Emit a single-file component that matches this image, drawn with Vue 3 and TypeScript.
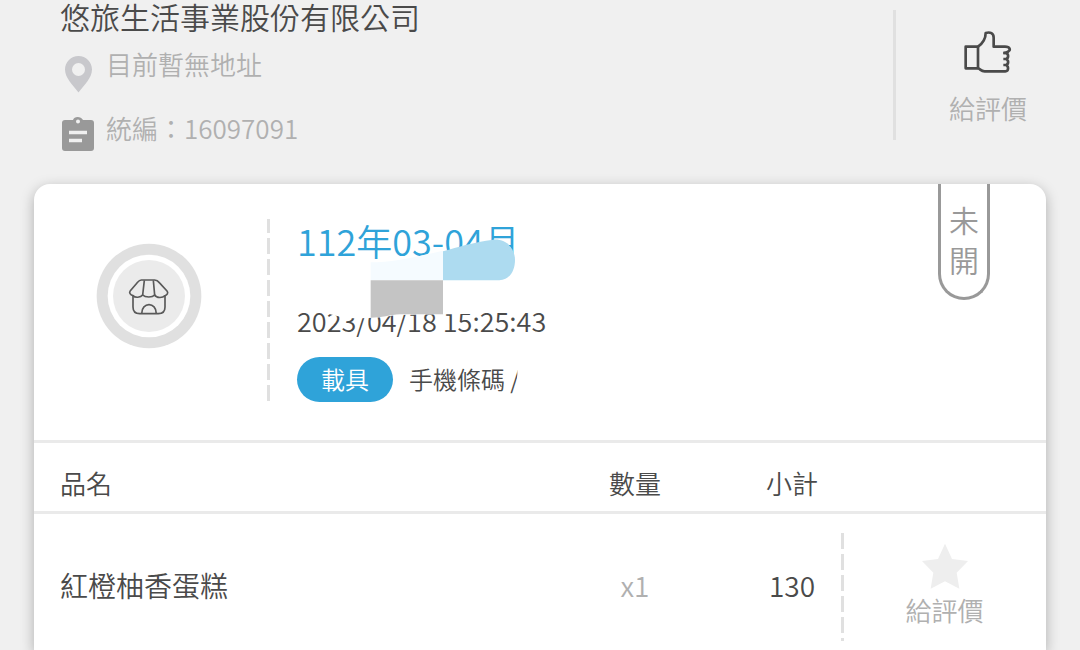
<script setup lang="ts">
interface Item {
  name: string
  quantity: number
  subtotal: number
}

const seller = { name: '悠旅生活事業股份有限公司', address: '目前暫無地址', taxId: '16097091' }
const invoice = { period: '112年03-04月', time: '2023/04/18 15:25:43', carrier: '手機條碼 /' }
const items: Item[] = [{ name: '紅橙柚香蛋糕', quantity: 1, subtotal: 130 }]
</script>

<template>
  <main class="page">
    <header class="seller">
      <div class="seller-info">
        <h1>{{ seller.name }}</h1>
        <p class="detail">
          <svg class="detail-icon" viewBox="0 0 36 46" aria-hidden="true">
            <path fill="#c8c8cc" fill-rule="evenodd" d="M18.5 9C11 9 5 15 5 22.5C5 31 13 38 18.5 45.500C24 38 32 31 32 22.500C32 15 26 9 18.500 9ZM18.500 16A6.500 6.500 0 1 1 18.500 29A6.500 6.500 0 1 1 18.500 16Z" />
          </svg>
          <span>{{ seller.address }}</span>
        </p>
        <p class="detail">
          <svg class="detail-icon" viewBox="0 0 36 46" aria-hidden="true">
            <path fill="#999" fill-rule="evenodd" d="M5 9H13C14 5 21 5 23 9H31Q34 9 34 12V37Q34 40 31 40H5Q2 40 2 37V12Q2 9 5 9ZM18 8.500A2 2 0 1 0 18 12.500A2 2 0 1 0 18 8.500Z" />
            <path stroke="#f0f0f0" stroke-width="3.500" d="M9 21.500H27M9 29.500H22" />
          </svg>
          <span>統編：{{ seller.taxId }}</span>
        </p>
      </div>
      <button class="rate rate-seller" type="button">
        <svg class="thumb" viewBox="249 86 150 138" aria-hidden="true">
          <g fill="none" stroke="#4a4a4a" stroke-width="8" stroke-linejoin="round">
            <path d="M257 139H294V204H257Z" />
            <path d="M294 139C308 129 317 118 317 98C331 94 341 99 341 112V139H375C391 139 392 149 385 153C382 157 376 158 370 158" />
            <path d="M370 158H378C387 161 386 174 378 176H370M378 176C387 179 386 192 378 194H370M378 194C386 197 387 213 376 213H314C303 213 301 206 294 204" />
          </g>
        </svg>
        <span>給評價</span>
      </button>
    </header>

    <section class="card">
      <div class="summary">
        <div class="store">
          <svg class="store-icon" viewBox="230 218 318 318" aria-hidden="true">
            <circle cx="389" cy="377" r="157" fill="#e0e0e0" />
            <circle cx="389" cy="377" r="124" fill="#fff" />
            <circle cx="389" cy="377" r="108" fill="#ebebeb" />
            <g fill="none" stroke="#595959" stroke-width="5" stroke-linejoin="round">
              <path d="M366 329H406C414 329 417 333 422 339L443 362C448 368 443 374 437 376C430 383 412 384 406 374C399 382 378 382 370 374C364 382 347 383 341 376C333 374 328 367 333 361L353 338C358 332 360 329 366 329Z" />
              <path d="M375 330L370 374M402 330L406 374M341 376V410Q341 430 361 430H417Q437 430 437 410V376M367 430C367 394 411 394 411 430" />
            </g>
          </svg>
        </div>
        <div class="info">
          <h2>{{ invoice.period }}</h2>
          <p class="time">{{ invoice.time }}</p>
          <p class="carrier">
            <span class="pill">載具</span>
            <span>{{ invoice.carrier }}</span>
          </p>
          <svg class="redaction" viewBox="-30 27 870 549" aria-hidden="true">
            <path fill="#fff" d="M42 205L272 157C340 157 410 140 489 122L658 211L585 311C550 313 430 312 350 315C300 324 240 327 200 323C160 318 110 304 42 270Z" />
            <path fill="#f5fbff" d="M272 157C340 157 410 140 489 122V211H272Z" />
            <path fill="#addbf0" d="M489 124C535 110 580 97 640 89C680 86 705 116 705 150C705 180 690 210 658 211H489Z" />
            <path fill="#c4c4c4" d="M272 211H489V313H360C330 315 305 323 272 323Z" />
            <path fill="#fff" d="M712 465V495L706 550H760V465Z" />
          </svg>
        </div>
        <span class="status">未<br />開</span>
      </div>

      <table class="items">
        <colgroup>
          <col />
          <col class="col-quantity" />
          <col class="col-subtotal" />
          <col class="col-action" />
        </colgroup>
        <thead>
          <tr>
            <th class="name" scope="col">品名</th>
            <th scope="col">數量</th>
            <th scope="col">小計</th>
            <td></td>
          </tr>
        </thead>
        <tbody>
          <tr v-for="item in items" :key="item.name">
            <td class="name">{{ item.name }}</td>
            <td class="quantity">x{{ item.quantity }}</td>
            <td>{{ item.subtotal }}</td>
            <td class="action">
              <button class="rate rate-item" type="button">
                <svg class="star" viewBox="304 130 138 138" aria-hidden="true">
                  <path fill="#eee" d="M373 132L394 178L442 184L408 219L416 267L373 245L330 267L338 219L304 184L352 178Z" />
                </svg>
                <span>給評價</span>
              </button>
            </td>
          </tr>
        </tbody>
      </table>
    </section>
  </main>
</template>

<style>
body {
  margin: 0;
  background: #f0f0f0;
}
</style>

<style scoped>
.page {
  display: flex;
  flex-direction: column;
  min-height: 100vh;
  background: #f0f0f0;
  color: #4a4a4a;
  font-family: "Noto Sans CJK TC", sans-serif;
  font-weight: 350;
}

h1,
h2,
p {
  margin: 0;
  font-weight: inherit;
}

.seller {
  display: flex;
  align-items: flex-start;
  padding-bottom: 27px;
}

.seller-info {
  flex: 1;
  padding-left: 60px;
}

h1 {
  margin-bottom: 15px;
  font-size: 30px;
  line-height: 32px;
}

.detail {
  display: flex;
  gap: 10px;
  margin-bottom: 18px;
  color: #b0b0b0;
  font-size: 26px;
  line-height: 34px;
}

.detail:last-child {
  margin-bottom: 0;
}

.detail-icon {
  width: 36px;
  height: 46px;
}

.rate {
  display: flex;
  flex-direction: column;
  align-items: center;
  box-sizing: border-box;
  border: 0;
  background: none;
  color: #b0b0b0;
  font: inherit;
  font-size: 26px;
  line-height: 34px;
}

.rate-seller {
  gap: 16px;
  width: 187px;
  height: 130px;
  margin-top: 10px;
  padding: 19px 0 0;
  border-left: 3px solid #e0e0e0;
}

.thumb {
  width: 50px;
  height: 46px;
}

.card {
  flex: 1;
  margin: 0 34px;
  border-radius: 16px 16px 0 0;
  background: #fff;
  box-shadow: 0 4px 14px rgba(0, 0, 0, 0.28);
}

.summary {
  position: relative;
  display: flex;
  padding: 35px 0 38px;
  border-bottom: 3px solid #eaeaea;
}

.store {
  box-sizing: border-box;
  width: 233px;
  padding: 24px 0 0 62px;
}

.store-icon {
  display: block;
  width: 106px;
  height: 106px;
}

.info {
  position: relative;
  padding-left: 30px;
  background: repeating-linear-gradient(#e0e0e0 0 16px, transparent 16px 21px) 0 -2px / 3px 190px no-repeat;
}

h2 {
  margin-bottom: 44px;
  color: #2fa3d9;
  font-size: 36px;
  line-height: 42px;
}

.time {
  margin-bottom: 20px;
  font-size: 27px;
  line-height: 32px;
}

.carrier {
  display: flex;
  align-items: flex-start;
  gap: 16px;
  font-size: 24px;
  line-height: 43px;
}

.pill {
  padding: 0 24px 2px;
  border-radius: 23px;
  background: #2fa3d9;
  color: #fff;
}

.redaction {
  position: absolute;
  top: 0;
  left: 3px;
  width: 290px;
  height: 183px;
}

.status {
  position: absolute;
  top: 0;
  right: 56px;
  box-sizing: border-box;
  width: 52px;
  padding: 15px 0 18px;
  border: 3px solid #999;
  border-top: 0;
  border-radius: 0 0 26px 26px;
  color: #999;
  font-size: 30px;
  line-height: 40px;
  text-align: center;
}

.items {
  width: 100%;
  border-collapse: collapse;
  table-layout: fixed;
  font-size: 28px;
  line-height: 36px;
  text-align: center;
}

.col-quantity {
  width: 216px;
}

.col-subtotal {
  width: 98px;
}

.col-action {
  width: 205px;
}

.items th,
.items td {
  padding: 0;
  font-weight: inherit;
}

.items thead tr {
  height: 71px;
  box-shadow: inset 0 -3px #eaeaea;
}

.items th {
  padding: 22px 0 13px;
  font-size: 26px;
}

.items tbody td {
  padding: 17px 0 11px;
}

.items tbody .action {
  padding: 19px 0 9px;
}

.items .name {
  padding-left: 26px;
  text-align: left;
}

.items .quantity {
  color: #b0b0b0;
}

.rate-item {
  gap: 4px;
  width: 100%;
  padding: 10px 0 14px 2px;
  background: repeating-linear-gradient(#e0e0e0 0 16px, transparent 16px 21px) 0 0 / 3px 100% no-repeat;
}

.star {
  width: 46px;
  height: 46px;
}
</style>
